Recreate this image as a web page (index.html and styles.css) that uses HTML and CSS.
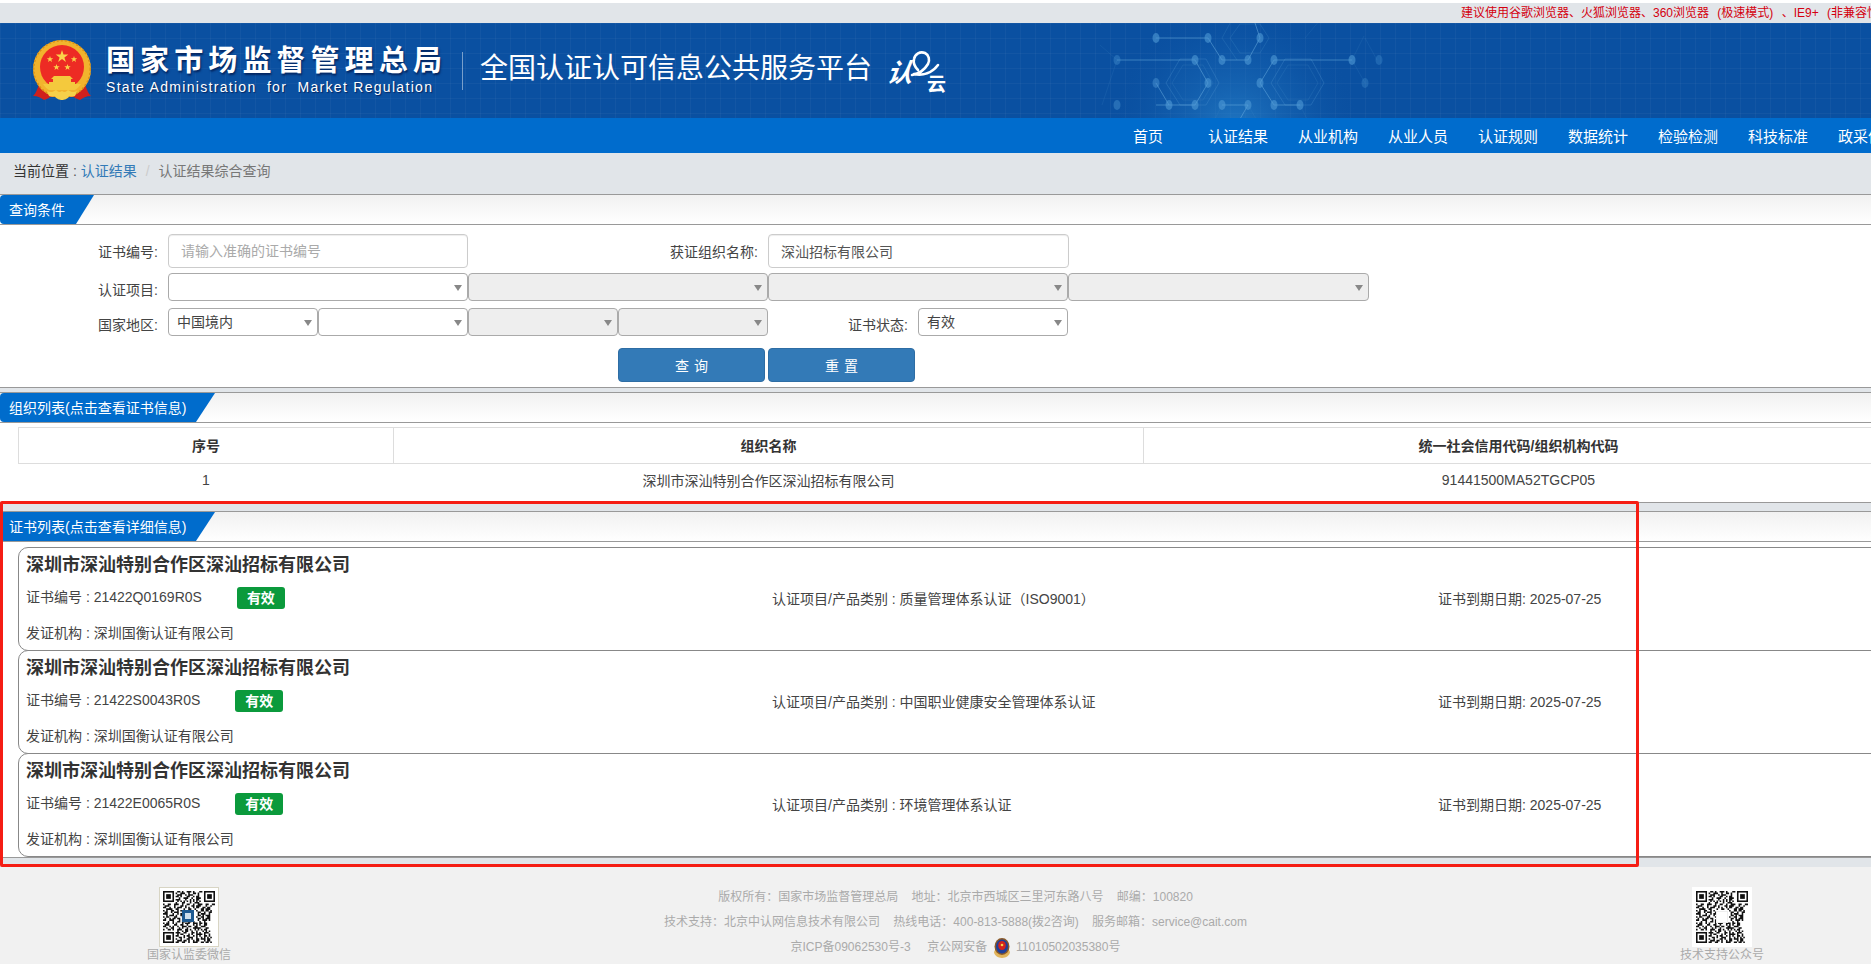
FILE: index.html
```html
<!DOCTYPE html>
<html lang="zh-CN">
<head>
<meta charset="utf-8">
<title>认证结果综合查询</title>
<link rel="stylesheet" href="styles.css">
</head>
<body>
<svg class="defs" width="0" height="0" aria-hidden="true">
  <symbol id="qr" viewBox="0 0 33 33">
    <path fill="none" stroke="#111" stroke-width="1" d="M9 .5h2m1 0h1m2 0h3m1 0h1m3 0h2M8 1.5h1m2 0h3m2 0h1m2 0h2m1 0h1M9 2.5h3m2 0h1m1 0h3m3 0h1M8 3.5h2m1 0h1m3 0h2m2 0h1m1 0h2M10 4.5h1m2 0h3m2 0h1m2 0h3M8 5.5h3m3 0h1m2 0h1m1 0h1m1 0h2M9 6.5h1m1 0h1m1 0h1m1 0h1m1 0h1m1 0h1m1 0h1m1 0h1M8 7.5h1m3 0h2m3 0h1m2 0h3M0 8.5h1m2 0h2m2 0h3m2 0h1m2 0h2m2 0h1m2 0h3m2 0h2m2 0h2M1 9.5h3m3 0h1m3 0h2m1 0h1m3 0h2m1 0h3m3 0h1m2 0h1M0 10.5h2m2 0h1m2 0h1m1 0h3m2 0h1m1 0h1m2 0h1m1 0h2m2 0h2m1 0h2M2 11.5h4m2 0h2m3 0h1m2 0h2m2 0h1m3 0h2m1 0h3M0 12.5h1m1 0h1m2 0h2m2 0h1m1 0h1m9 0h1m2 0h2m1 0h2m1 0h1M1 13.5h2m2 0h1m1 0h3m2 0h1m9 0h2m2 0h1m2 0h2M0 14.5h3m3 0h1m2 0h1m1 0h2m9 0h1m1 0h3m2 0h1M2 15.5h1m1 0h3m1 0h1m2 0h1m10 0h2m1 0h1m1 0h3M0 16.5h1m1 0h2m3 0h2m3 0h1m8 0h1m2 0h2m2 0h2M1 17.5h1m2 0h1m1 0h2m1 0h2m2 0h1m8 0h2m1 0h1m1 0h3M0 18.5h2m2 0h3m3 0h1m1 0h1m9 0h1m2 0h3m1 0h1M3 19.5h1m2 0h1m2 0h2m1 0h2m2 0h2m1 0h1m3 0h1m2 0h1M0 20.5h1m1 0h2m2 0h1m1 0h1m3 0h1m1 0h3m2 0h3m1 0h2m1 0h2M1 21.5h3m3 0h2m2 0h2m2 0h1m3 0h1m1 0h1m1 0h1m2 0h2M0 22.5h2m2 0h1m1 0h1m2 0h1m2 0h3m1 0h2m2 0h2m2 0h3M2 23.5h1m2 0h2m3 0h1m1 0h1m2 0h1m3 0h5m3 0h2M0 24.5h1m2 0h2m1 0h1m2 0h3m2 0h2m1 0h1m2 0h1m1 0h1m1 0h1m1 0h2M9 25.5h1m2 0h1m1 0h2m2 0h1m2 0h1m3 0h1m1 0h1m1 0h1M8 26.5h3m2 0h2m3 0h2m1 0h1m1 0h1m2 0h3M9 27.5h1m1 0h2m3 0h1m1 0h1m2 0h4m1 0h1m2 0h1M8 28.5h2m3 0h1m1 0h2m2 0h1m1 0h1m1 0h1m2 0h2m1 0h1M10 29.5h2m1 0h1m2 0h3m2 0h1m2 0h1m1 0h1m1 0h1m1 0h1M8 30.5h1m2 0h1m3 0h2m1 0h1m2 0h2m1 0h3m1 0h2M9 31.5h3m1 0h2m1 0h1m2 0h1m1 0h2m3 0h1m1 0h2M8 32.5h2m2 0h2m2 0h1m2 0h3m2 0h2m1 0h2m1 0h1"/>
    <g fill="none" stroke="#111">
      <rect x=".5" y=".5" width="6" height="6"/><rect x="26.5" y=".5" width="6" height="6"/><rect x=".5" y="26.5" width="6" height="6"/>
    </g>
    <g fill="#111"><rect x="2" y="2" width="3" height="3"/><rect x="28" y="2" width="3" height="3"/><rect x="2" y="28" width="3" height="3"/></g>
  </symbol>
</svg>

<div class="page">
  <div class="topbar">建议使用谷歌浏览器、火狐浏览器、360浏览器 (极速模式) 、IE9+ (非兼容性模式)</div>

  <header class="banner">
    <svg class="hex" width="420" height="95" viewBox="0 0 420 95" aria-hidden="true">
      <defs>
        <radialGradient id="glow" cx="135" cy="105" r="125" gradientUnits="userSpaceOnUse">
          <stop offset="0" stop-color="#2f8fd6" stop-opacity=".6"/>
          <stop offset=".6" stop-color="#1c70bd" stop-opacity=".25"/>
          <stop offset="1" stop-color="#0a50a1" stop-opacity="0"/>
        </radialGradient>
      </defs>
      <rect width="420" height="95" fill="url(#glow)"/>
      <g fill="none" stroke="#4f95cf" stroke-opacity=".3">
        <path d="M66 60l14-24h26l13 24-13 22H80z" />
        <path d="M72 60l11-18h20l10 18-10 17H83z" stroke-opacity=".18"/>
        <path d="M171 60l14-24h26l13 24-13 22h-26z"/>
        <path d="M177 60l11-18h20l10 18-10 17h-20z" stroke-opacity=".18"/>
        <path d="M122 15l13-24h26l-1 0M122 15l15 22M130 15l10-14h20l9 14-9 15h-20z" stroke-opacity=".22"/>
        <path d="M-8 15l14-24M-8 15l25 22M17 37l-15 45M148 82l14 24M122 82l-12 24M200 82l12 24M265 60l-13-23M252 37l12-24M205 15l20-24M265 15l12 22" stroke-opacity=".14"/>
      </g>
      <g fill="none" stroke="#6cb0e2" stroke-opacity=".5">
        <path d="M56 15h52M17 37h78M122 37h26M174 37h78M56 82h13h26M122 82h26M174 82h26"/>
        <path d="M108 15l14 22M160 15l-12 22M160 15l-8-24M174 37l-14 23M95 37l13 23M108 60L95 82M56 60l13 22M160 60l14 22M148 82l-8 14"/>
      </g>
      <g fill="#4f9ad6" fill-opacity=".6">
        <ellipse cx="56" cy="15" rx="3.5" ry="5"/><ellipse cx="108" cy="15" rx="3.5" ry="5"/><ellipse cx="160" cy="15" rx="3.5" ry="5"/>
        <ellipse cx="17" cy="37" rx="3.5" ry="5" fill-opacity=".35"/><ellipse cx="95" cy="37" rx="3.5" ry="5"/><ellipse cx="122" cy="37" rx="3.5" ry="5"/><ellipse cx="148" cy="37" rx="3.5" ry="5"/><ellipse cx="174" cy="37" rx="3.5" ry="5"/><ellipse cx="252" cy="37" rx="3.5" ry="5"/><ellipse cx="279" cy="37" rx="3.5" ry="5" fill-opacity=".3"/>
        <ellipse cx="56" cy="60" rx="3.5" ry="5" fill-opacity=".45"/><ellipse cx="108" cy="60" rx="3.5" ry="5"/><ellipse cx="160" cy="60" rx="3.5" ry="5"/><ellipse cx="265" cy="60" rx="3.5" ry="5" fill-opacity=".3"/>
        <ellipse cx="17" cy="82" rx="3.5" ry="5" fill-opacity=".4"/><ellipse cx="69" cy="82" rx="3.5" ry="5"/><ellipse cx="95" cy="82" rx="3.5" ry="5"/><ellipse cx="122" cy="82" rx="3.5" ry="5"/><ellipse cx="148" cy="82" rx="3.5" ry="5"/><ellipse cx="174" cy="82" rx="3.5" ry="5"/><ellipse cx="200" cy="82" rx="3.5" ry="5"/>
      </g>
    </svg>

    <svg class="emblem" width="60" height="62" viewBox="0 0 60 62" aria-label="国徽">
      <path d="M7 44c-2 7-4 10-6 12 5 0 8 2 11 4 4-1 6-3 6-3H42s2 2 6 3c3-2 6-4 11-4-2-2-4-5-6-12z" fill="#d0201d"/>
      <circle cx="30" cy="29" r="29" fill="#f2b32d"/>
      <circle cx="30" cy="29" r="28.300" fill="none" stroke="#d98f17" stroke-width="1.500" stroke-dasharray="2 2"/>
      <circle cx="30" cy="27" r="22" fill="#ed2b24"/>
      <path d="M30 10l1.500 4.600h4.800l-3.900 2.800 1.500 4.600-3.900-2.900-3.900 2.900 1.500-4.600-3.900-2.800h4.800z" fill="#fbd34a"/>
      <path d="M18 16l.8 2.300h2.400l-1.900 1.400.7 2.300-2-1.400-2 1.400.7-2.300-1.900-1.400h2.400zM42 16l.8 2.300h2.400l-1.900 1.400.7 2.300-2-1.400-2 1.400.7-2.300-1.900-1.400h2.400zM24.500 24l.8 2.300h2.400l-1.900 1.400.7 2.300-2-1.400-2 1.400.7-2.300-1.900-1.400h2.400zM35.500 24l.8 2.300h2.400l-1.900 1.400.7 2.300-2-1.400-2 1.400.7-2.300-1.900-1.400h2.400z" fill="#fbd34a"/>
      <path d="M22 36h16l3 3H19zM21 39h18v3H21zM17 42h26v2H17zM11 44h38c-2 3-4 5-6 6H17c-2-1-4-3-6-6z" fill="#f4c93d"/>
      <path d="M15 51c4 2 6 1 9-1 2 2 4 3 6 1 2 2 4 1 6-1 3 2 5 3 9 1l-2 5c-2 1-4 1-6 0-1 3-5 4-7 4s-6-1-7-4c-2 1-4 1-6 0z" fill="#f6d04a"/>
    </svg>

    <div class="brand">
      <div class="brand-cn">国家市场监督管理总局</div>
      <div class="brand-en">State Administration&nbsp; for&nbsp; Market Regulation</div>
    </div>
    <div class="divider"></div>
    <div class="subtitle">全国认证认可信息公共服务平台</div>
    <svg class="cloud" width="68" height="48" viewBox="-2 -3 68 48" aria-label="认云">
      <text class="cloud-a" x="2" y="31" transform="skewX(-8) translate(3 0)">认</text>
      <path d="M27 24c7-1 13-6 16-11 2-4 1-9-3-11-5-2-10 1-11 6-1 4 1 8 4 11M29 23c9 2 18-1 24-9" fill="none" stroke="#fff" stroke-width="2.600" stroke-linecap="round"/>
      <text class="cloud-b" x="42" y="40">云</text>
    </svg>
  </header>

  <nav class="nav">
    <a>首页</a><a>认证结果</a><a>从业机构</a><a>从业人员</a><a>认证规则</a><a>数据统计</a><a>检验检测</a><a>科技标准</a><a>政采信息</a>
  </nav>

  <div class="crumbs">
    <span class="crumb-label">当前位置</span><span class="crumb-sep"> : </span><a class="crumb-link">认证结果</a><span class="crumb-slash">/</span><span class="crumb-now">认证结果综合查询</span>
  </div>

  <section class="sec">
    <div class="sec-head"><div class="tab tab-short">查询条件</div></div>
    <form class="query">
      <div class="row row-input">
        <label class="lbl lbl-a">证书编号:</label>
        <input class="inp" placeholder="请输入准确的证书编号">
        <label class="lbl lbl-b">获证组织名称:</label>
        <input class="inp inp-b" value="深汕招标有限公司">
      </div>
      <div class="row row-sel">
        <label class="lbl lbl-a lbl-low">认证项目:</label>
        <span class="sel sel-l"><select></select></span>
        <span class="sel sel-l"><select disabled></select></span>
        <span class="sel sel-l"><select disabled></select></span>
        <span class="sel sel-l sel-end"><select disabled></select></span>
      </div>
      <div class="row row-sel">
        <label class="lbl lbl-a lbl-low">国家地区:</label>
        <span class="sel sel-s"><select><option>中国境内</option></select></span>
        <span class="sel sel-s"><select></select></span>
        <span class="sel sel-s"><select disabled></select></span>
        <span class="sel sel-s"><select disabled></select></span>
        <label class="lbl lbl-c lbl-low">证书状态:</label>
        <span class="sel sel-s"><select><option>有效</option></select></span>
      </div>
      <div class="btns">
        <button type="button" class="btn">查询</button>
        <button type="button" class="btn">重置</button>
      </div>
    </form>
  </section>

  <section class="sec sec-org">
    <div class="sec-head"><div class="tab">组织列表(点击查看证书信息)</div></div>
    <div class="org">
      <table class="org-table">
        <thead><tr><th class="c1">序号</th><th class="c2">组织名称</th><th class="c3">统一社会信用代码/组织机构代码</th></tr></thead>
        <tbody><tr><td>1</td><td>深圳市深汕特别合作区深汕招标有限公司</td><td>91441500MA52TGCP05</td></tr></tbody>
      </table>
    </div>
  </section>

  <section class="sec sec-cert">
    <div class="sec-head"><div class="tab">证书列表(点击查看详细信息)</div></div>
    <div class="cards">
      <article class="card">
        <h3 class="card-title">深圳市深汕特别合作区深汕招标有限公司</h3>
        <div class="card-row">
          <div class="cell-no">证书编号 : 21422Q0169R0S<span class="badge">有效</span></div>
          <div class="cell-type">认证项目/产品类别 : 质量管理体系认证（ISO9001）</div>
          <div>证书到期日期: 2025-07-25</div>
        </div>
        <div class="card-row">发证机构 : 深圳国衡认证有限公司</div>
      </article>
      <article class="card">
        <h3 class="card-title">深圳市深汕特别合作区深汕招标有限公司</h3>
        <div class="card-row">
          <div class="cell-no">证书编号 : 21422S0043R0S<span class="badge">有效</span></div>
          <div class="cell-type">认证项目/产品类别 : 中国职业健康安全管理体系认证</div>
          <div>证书到期日期: 2025-07-25</div>
        </div>
        <div class="card-row">发证机构 : 深圳国衡认证有限公司</div>
      </article>
      <article class="card">
        <h3 class="card-title">深圳市深汕特别合作区深汕招标有限公司</h3>
        <div class="card-row">
          <div class="cell-no">证书编号 : 21422E0065R0S<span class="badge">有效</span></div>
          <div class="cell-type">认证项目/产品类别 : 环境管理体系认证</div>
          <div>证书到期日期: 2025-07-25</div>
        </div>
        <div class="card-row">发证机构 : 深圳国衡认证有限公司</div>
      </article>
    </div>
  </section>

  <footer class="footer">
    <div class="qr-col">
      <div class="qr qr-framed">
        <svg width="52" height="52" aria-hidden="true"><use href="#qr"/></svg>
        <span class="qr-logo qr-logo-blue"></span>
      </div>
      <div class="qr-cap">国家认监委微信</div>
    </div>
    <div class="foot-mid">
      <p>版权所有：国家市场监督管理总局&nbsp;&nbsp;&nbsp;&nbsp;地址：北京市西城区三里河东路八号&nbsp;&nbsp;&nbsp;&nbsp;邮编：100820</p>
      <p>技术支持：北京中认网信息技术有限公司&nbsp;&nbsp;&nbsp;&nbsp;热线电话：400-813-5888(拨2咨询)&nbsp;&nbsp;&nbsp;&nbsp;服务邮箱：service@cait.com</p>
      <p>京ICP备09062530号-3&nbsp;&nbsp;&nbsp;&nbsp;&nbsp;京公网安备
        <svg class="police" width="18" height="20" viewBox="0 0 18 20" aria-label="公安备案">
          <path d="M1 14c0 3 4 6 8 6s8-3 8-6l-1-2H2z" fill="#e2b55c"/>
          <ellipse cx="9" cy="8.500" rx="7.500" ry="8.500" fill="#8a5a2a"/>
          <ellipse cx="9" cy="8.500" rx="6" ry="7" fill="#1f3f9a"/>
          <ellipse cx="9" cy="7.500" rx="3.800" ry="4.500" fill="#d3231d"/>
          <circle cx="9" cy="7" r="1.300" fill="#f6cf4b"/>
        </svg>
        11010502035380号</p>
    </div>
    <div class="qr-col">
      <div class="qr">
        <svg width="52" height="52" aria-hidden="true"><use href="#qr"/></svg>
        <span class="qr-logo"></span>
      </div>
      <div class="qr-cap">技术支持公众号</div>
    </div>
  </footer>

  <div class="marker"></div>
</div>
</body>
</html>
```
FILE: styles.css
```css
html, body { margin: 0; padding: 0; height: 964px; overflow: hidden; background: #fff; }
body, input, select, button { font-family: "Liberation Sans", "Noto Sans CJK SC", sans-serif; }
.defs { position: absolute; }
.page {
  position: relative;
  width: 1911px;
  margin-top: 3px;
  background: #e1e5e9;
  font-size: 14px;
  color: #333;
}

.topbar {
  height: 20px;
  line-height: 20px;
  padding-left: 1461px;
  font-size: 12px;
  word-spacing: 5px;
  color: #d4000f;
  white-space: nowrap;
  overflow: hidden;
}

.banner {
  position: relative;
  display: flex;
  align-items: center;
  height: 95px;
  padding-left: 32px;
  color: #fff;
  background-color: #0a50a1;
  background-image:
    linear-gradient(rgba(255,255,255,.035) 1px, transparent 1px),
    linear-gradient(90deg, rgba(255,255,255,.035) 1px, transparent 1px);
  background-size: 15px 15px, 15px 15px;
  box-sizing: border-box;
}
.hex { position: absolute; left: 1100px; top: 0; }
.emblem { flex: none; margin-right: 14px; position: relative; }
.brand { flex: none; width: 341px; margin-right: 15px; position: relative; }
.brand-cn {
  font-size: 29px;
  line-height: 34px;
  font-weight: 700;
  letter-spacing: 5.100px;
  white-space: nowrap;
  text-shadow: 1px 2px 2px rgba(0,20,70,.7);
}
.brand-en {
  font-size: 14px;
  line-height: 19px;
  letter-spacing: 1.300px;
  white-space: nowrap;
  text-shadow: 1px 1px 1px rgba(0,20,70,.7);
}
.divider { flex: none; width: 1px; height: 38px; background: rgba(255,255,255,.45); margin-right: 17px; }
.subtitle { flex: none; font-size: 28px; line-height: 36px; width: 392px; margin: -4px 11px 0 0; white-space: nowrap; }
.cloud { flex: none; margin-top: 3px; }
.cloud-a { font-size: 26px; font-weight: 700; font-style: italic; fill: #fff; }
.cloud-b { font-size: 19px; font-weight: 700; fill: #fff; }

.nav {
  display: flex;
  height: 35px;
  padding-left: 1103px;
  background: #006ccd;
  white-space: nowrap;
}
.nav a {
  flex: none;
  width: 90px;
  text-align: center;
  font-size: 15px;
  line-height: 38px;
  color: #fff;
}

.crumbs {
  height: 41px;
  line-height: 36px;
  padding-left: 13px;
  font-size: 14px;
}
.crumb-label { color: #333; }
.crumb-sep { color: #555; }
.crumb-link { color: #337ab7; }
.crumb-slash { color: #ccc; padding: 0 9px; }
.crumb-now { color: #777; }

.sec {
  background: #fff;
  border-top: 1px solid #999;
  border-bottom: 1px solid #999;
}
.sec-org { margin-top: 4px; }
.sec-cert { margin-top: 8px; }
.sec-head {
  height: 29px;
  border-bottom: 1px solid #999;
  background: linear-gradient(#f1f1f1, #fff);
}
.tab {
  width: 215px;
  height: 29px;
  box-sizing: border-box;
  padding-left: 9px;
  line-height: 30px;
  font-size: 14px;
  color: #fff;
  background: #006ccc;
  white-space: nowrap;
  clip-path: polygon(0 0, 215px 0, 196px 100%, 0 100%);
  border-top-left-radius: 4px;
  border-bottom-left-radius: 4px;
}
.tab-short {
  width: 94px;
  clip-path: polygon(0 0, 94px 0, 76px 100%, 0 100%);
}

.query { display: block; padding: 9px 0 5px; }
.row { display: flex; align-items: center; }
.row-input { height: 34px; }
.row-sel { height: 28px; margin-top: 5px; }
.row-sel + .row-sel { margin-top: 7px; }
.lbl { flex: none; text-align: right; color: #444; font-size: 14px; margin-right: 10px; white-space: nowrap; }
.lbl-a { width: 158px; }
.lbl-b { width: 290px; }
.lbl-c { width: 140px; }
.lbl-low { padding-top: 3px; }
.inp {
  flex: none;
  box-sizing: border-box;
  width: 300px;
  height: 34px;
  padding: 0 12px;
  border: 1px solid #ccc;
  border-radius: 4px;
  font-size: 14px;
  color: #555;
  background: #fff;
  box-shadow: inset 0 1px 1px rgba(0,0,0,.075);
  outline: none;
}
.inp-b { width: 301px; }
.inp::placeholder { color: #aaa; opacity: 1; }
.sel { position: relative; flex: none; display: block; height: 28px; }
.sel-l { width: 300px; }
.sel-end { width: 301px; }
.sel-s { width: 150px; }
.sel::after {
  content: "";
  position: absolute;
  right: 6px;
  top: 12px;
  border-left: 4px solid transparent;
  border-right: 4px solid transparent;
  border-top: 6px solid #888;
  pointer-events: none;
}
.sel select {
  appearance: none;
  display: block;
  box-sizing: border-box;
  width: 100%;
  height: 28px;
  padding: 0 18px 0 8px;
  border: 1px solid #aaa;
  border-radius: 4px;
  background: #fff;
  font-size: 14px;
  color: #444;
  opacity: 1;
  outline: none;
}
.sel select:disabled { background: #eee; }

.btns { display: flex; gap: 3px; margin: 12px 0 0 618px; }
.btn {
  width: 147px;
  height: 34px;
  padding: 0;
  border: 1px solid #2e6da4;
  border-radius: 4px;
  background: #337ab7;
  color: #fff;
  font-size: 14px;
  letter-spacing: 5px;
  text-indent: 5px;
}

.org { padding: 4px 18px; }
.org-table {
  border-collapse: collapse;
  table-layout: fixed;
  width: 1872px;
  font-size: 14px;
  color: #333;
  text-align: center;
}
.org-table th { height: 34px; padding: 0 0 1px; border: 1px solid #ddd; font-weight: 700; }
.org-table td { height: 32px; padding: 0 0 2px; color: #444; }
.c1 { width: 374px; }
.c2 { width: 749px; }
.c3 { width: 749px; }

.cards { padding: 5px 0 0 18px; }
.card {
  width: 1875px;
  height: 104px;
  box-sizing: border-box;
  margin-top: -1px;
  padding-left: 7px;
  border: 1px solid #888;
  border-radius: 10px 0 0 10px;
  background: #fff;
}
.card:first-child { margin-top: 0; }
.card-title {
  margin: 0;
  height: 34px;
  line-height: 34px;
  font-size: 18px;
  font-weight: 700;
  color: #333;
}
.card-row {
  display: flex;
  align-items: center;
  height: 31px;
  padding-bottom: 3px;
  font-size: 14px;
  color: #444;
  white-space: nowrap;
}
.cell-no { width: 746px; flex: none; }
.cell-type { width: 666px; flex: none; }
.badge {
  display: inline-block;
  width: 48px;
  height: 22px;
  margin-left: 35px;
  border-radius: 3px;
  background: #0b9a3c;
  color: #fff;
  font-size: 14px;
  font-weight: 700;
  line-height: 22px;
  text-align: center;
  vertical-align: middle;
}

.footer {
  display: grid;
  grid-template-columns: 378px 1fr 378px;
  height: 100px;
  margin-top: 9px;
  padding-top: 20px;
  box-sizing: border-box;
  background: #f1f1f1;
  color: #aaa;
  font-size: 12px;
}
.qr-col { display: flex; flex-direction: column; align-items: center; }
.qr {
  position: relative;
  box-sizing: border-box;
  width: 60px;
  height: 60px;
  padding: 4px;
  background: #fff;
}
.qr svg { display: block; }
.qr-framed { border: 1px solid #d8d5c4; padding: 3px; }
.qr-logo {
  position: absolute;
  left: 24px;
  top: 24px;
  width: 12px;
  height: 12px;
  background: #fff;
  border: 1px solid #eee;
  box-sizing: border-box;
}
.qr-logo-blue { left: 22px; top: 22px; background: #1d5a92; border: 3px solid #1d5a92; box-shadow: inset 0 0 0 3px #cfe0ee; }
.qr-cap { line-height: 16px; white-space: nowrap; }
.foot-mid { text-align: center; margin-top: -2px; }
.foot-mid p { margin: 0; height: 25px; line-height: 25px; white-space: nowrap; }
.police { vertical-align: middle; margin: 0 2px; }

.marker {
  position: absolute;
  left: 0;
  top: 498px;
  width: 1639px;
  height: 366px;
  box-sizing: border-box;
  border: 3px solid #f51d14;
  border-radius: 2px;
  pointer-events: none;
}
```
